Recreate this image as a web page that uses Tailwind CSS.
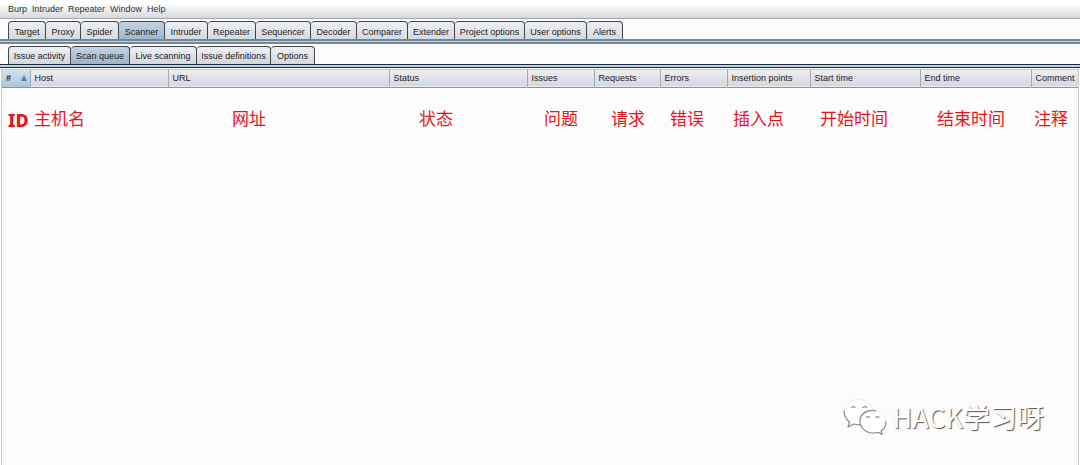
<!DOCTYPE html>
<html lang="zh-CN">
<head>
<meta charset="utf-8">
<meta name="viewport" content="width=device-width, initial-scale=1">
<title>Burp Scanner - Scan queue</title>
<script src="https://cdn.jsdelivr.net/npm/@tailwindcss/browser@4"></script>
</head>
<body class="relative flex h-screen flex-col overflow-hidden bg-[#fcfcfc] font-['Liberation_Sans',Arial,'Noto_Sans_CJK_SC',sans-serif] text-[9px] leading-3 text-[#222]">
<nav aria-label="Menu" class="flex h-[19px] shrink-0 items-center gap-[5px] border-b border-[#a3a6ad] bg-linear-to-b from-white from-20% to-[#d5d8de] pl-2 text-[#333]">
  <button type="button">Burp</button>
  <button type="button">Intruder</button>
  <button type="button">Repeater</button>
  <button type="button">Window</button>
  <button type="button">Help</button>
</nav>
<div role="tablist" aria-label="Tools" class="flex h-5 shrink-0 px-2 mt-[2px] *:h-full *:shrink-0 *:rounded-t-[4px] *:border-t *:border-r *:border-[#41454d] *:bg-linear-to-b *:from-[#eff0f4] *:to-[#d3d6dd] *:whitespace-nowrap *:first:border-l *:aria-selected:from-[#c3d3e1] *:aria-selected:to-[#9bb4c8]">
  <button type="button" role="tab" class="w-[38px]">Target</button>
  <button type="button" role="tab" class="w-[35px]">Proxy</button>
  <button type="button" role="tab" class="w-[38px]">Spider</button>
  <button type="button" role="tab" aria-selected="true" class="w-[46px]">Scanner</button>
  <button type="button" role="tab" class="w-[43px]">Intruder</button>
  <button type="button" role="tab" class="w-[48px]">Repeater</button>
  <button type="button" role="tab" class="w-[55px]">Sequencer</button>
  <button type="button" role="tab" class="w-[46px]">Decoder</button>
  <button type="button" role="tab" class="w-[51px]">Comparer</button>
  <button type="button" role="tab" class="w-[47px]">Extender</button>
  <button type="button" role="tab" class="w-[70px]">Project options</button>
  <button type="button" role="tab" class="w-[62px]">User options</button>
  <button type="button" role="tab" class="w-[36px]">Alerts</button>
</div>
<div class="-mt-[2px] h-[5px] shrink-0 border-y-2 border-[#73879a] bg-[#c3d3df]"></div>
<div role="tablist" aria-label="Scanner" class="flex h-[18px] shrink-0 px-2 mt-[2px] *:h-full *:shrink-0 *:rounded-t-[4px] *:border-t *:border-r *:border-[#41454d] *:bg-linear-to-b *:from-[#eff0f4] *:to-[#d3d6dd] *:whitespace-nowrap *:first:border-l *:aria-selected:from-[#c3d3e1] *:aria-selected:to-[#9bb4c8]">
  <button type="button" role="tab" class="w-[63px]">Issue activity</button>
  <button type="button" role="tab" aria-selected="true" class="w-[59px]">Scan queue</button>
  <button type="button" role="tab" class="w-[67px]">Live scanning</button>
  <button type="button" role="tab" class="w-[74px]">Issue definitions</button>
  <button type="button" role="tab" class="w-[44px]">Options</button>
</div>
<div class="h-1 shrink-0 border-y border-[#182b42] bg-[#bfd0df]"></div>
<main class="mx-px mt-px min-h-0 flex-1 border-x border-t border-[#c9cbcf]">
  <table class="w-full table-fixed border-collapse text-left">
    <colgroup>
      <col class="w-[28px]"><col class="w-[138px]"><col><col class="w-[138px]"><col class="w-[67px]"><col class="w-[66px]"><col class="w-[67px]"><col class="w-[83px]"><col class="w-[110px]"><col class="w-[111px]"><col class="w-[47px]">
    </colgroup>
    <thead>
      <tr class="h-[17px] border-b border-[#8d9199] bg-linear-to-b from-[#eceef2] to-[#d4d7de] *:border-r *:border-[#a6a9b0] *:pl-1 *:font-normal *:whitespace-nowrap *:last:border-r-0">
        <th scope="col" class="bg-linear-to-b from-[#d3e2f0] to-[#a9c5dd]">
          <span class="flex items-center justify-between pr-[3px]"><b>#</b><svg class="size-[6px]" viewBox="0 0 6 6" aria-hidden="true"><path d="M3 0 6 6H0Z" fill="#4f82ad"/></svg></span>
        </th>
        <th scope="col">Host</th>
        <th scope="col">URL</th>
        <th scope="col">Status</th>
        <th scope="col">Issues</th>
        <th scope="col">Requests</th>
        <th scope="col">Errors</th>
        <th scope="col">Insertion points</th>
        <th scope="col">Start time</th>
        <th scope="col">End time</th>
        <th scope="col">Comment</th>
      </tr>
    </thead>
    <tbody>
      <tr class="h-[66px] text-[17px] leading-5 whitespace-nowrap text-[#e8141c]">
        <td class="pl-[6px] font-['Noto_Sans',sans-serif] text-lg leading-5 font-extrabold">ID</td>
        <td class="pl-1">主机名</td>
        <td class="pl-16">网址</td>
        <td class="pl-[30px]">状态</td>
        <td class="pl-[17px]">问题</td>
        <td class="pl-[17px]">请求</td>
        <td class="pl-[10px]">错误</td>
        <td class="pl-[6px]">插入点</td>
        <td class="pl-[10px]">开始时间</td>
        <td class="pl-[17px]">结束时间</td>
        <td class="pl-[3px]">注释</td>
      </tr>
    </tbody>
  </table>
</main>
<div class="absolute right-[36px] bottom-[29px] flex items-center gap-[6px] text-[27px] leading-8 whitespace-nowrap text-white">
  <svg class="h-[38px] w-[44px]" viewBox="0 0 44 38" aria-hidden="true" stroke-linecap="round" stroke-linejoin="round">
    <g fill="#fff" stroke="#ececec" stroke-width="1">
      <path d="M15 1.500C7 1.500 1 7 1 14c0 4 2 7.500 5.500 10L5 29l6-3c2 .7 5 1 7 .6L30 12C28 5.500 22 1.500 15 1.500Z"/>
      <path d="M30 12.500c-7.500 0-13 5-13 11.500s5.500 11 13 11c2 0 3.500-.2 5-.7l4 2.200-1-3.600c3.500-2.100 5-5.200 5-8.900 0-6.500-5.500-11.500-13-11.500Z"/>
    </g>
    <g fill="none" stroke="#8b8b8b" stroke-width="1.200">
      <path d="M1 13c0 4.500 2 8 5.500 11L5 29l6-3c2 .7 4 .9 6 .6"/>
      <path d="M33 13C27 11 20 14 17.700 19c-3 8 3.300 16 12.300 16 2 0 3.500-.2 5-.7l4 2.200-1-3.600c3.500-2.100 5-5.200 5-8.900"/>
      <path d="M8.500 9.500q1.500-2 3.500 0M20 9.500q1.500-2 3.500 0M23.500 19.500q1.500-2 3 0M33 19.500q1.500-2 3 0"/>
    </g>
  </svg>
  <span class="font-['Noto_Sans_CJK_SC',sans-serif] text-shadow-[1px_1px_1px_#555]">HACK学习呀</span>
</div>
</body>
</html>
